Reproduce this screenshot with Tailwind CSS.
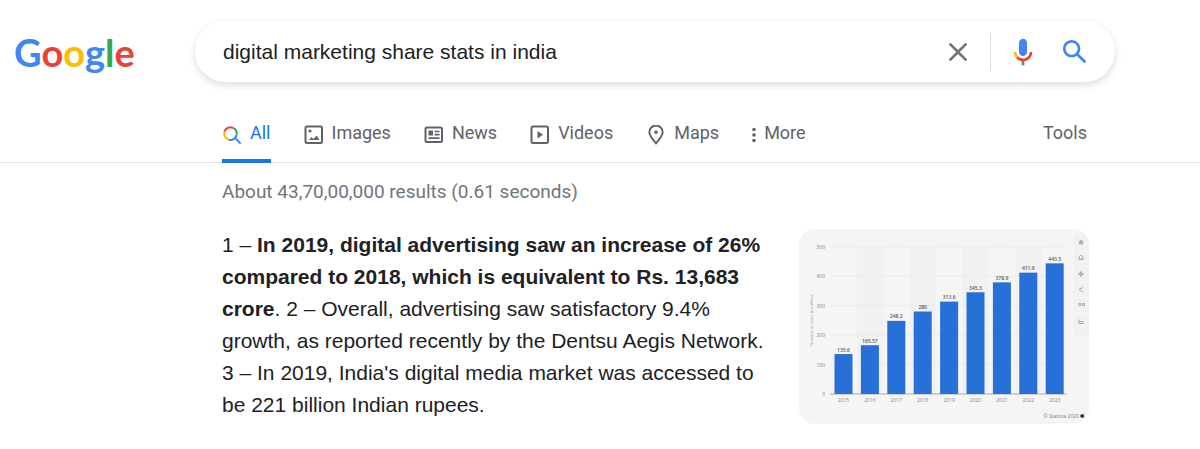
<!DOCTYPE html>
<html lang="en">
<head>
    <meta charset="UTF-8">
    <title>digital marketing share stats in india - Google Search</title>
    <meta name="viewport" content="width=device-width, initial-scale=1.0">
    <script src="https://cdn.jsdelivr.net/npm/@tailwindcss/browser@4"></script>
</head>
<body class="bg-white min-h-screen text-[#202124] font-['Liberation_Sans',Arial,sans-serif]">
    <!-- Logo and search box -->
    <header class="flex items-center pt-[21px] pl-[14px] pr-[85px]">
        <a href="#" aria-label="Google" class="w-[181px] shrink-0 font-['Lato',sans-serif] text-[38px] leading-none font-bold"><span class="text-[#4285f4]">G</span><span class="text-[#ea4335]">o</span><span class="text-[#fbbc05]">o</span><span class="text-[#4285f4]">g</span><span class="text-[#34a853]">l</span><span class="text-[#ea4335]">e</span></a>
        <form role="search" class="flex flex-1 items-center h-[61px] rounded-full bg-white pl-7 pr-6 shadow-[0_3px_6px_1px_rgba(64,60,67,0.14)]">
            <input type="text" name="q" aria-label="Search" value="digital marketing share stats in india" class="flex-1 min-w-0 text-[21px] outline-none">
            <button type="button" aria-label="Clear" class="mr-4">
                <svg class="size-8" viewBox="0 0 24 24" fill="#70757a"><path d="M19 6.41L17.59 5 12 10.59 6.41 5 5 6.41 10.59 12 5 17.59 6.41 19 12 13.41 17.59 19 19 17.59 13.41 12z"/></svg>
            </button>
            <span class="w-px h-[38px] bg-[#dadce0] mr-4"></span>
            <button type="button" aria-label="Search by voice" class="mr-5">
                <svg class="size-8" viewBox="0 0 24 24">
                    <path fill="#4285f4" d="m12 15c1.66 0 3-1.31 3-2.97v-7.02c0-1.66-1.34-3.01-3-3.01s-3 1.34-3 3.01v7.02c0 1.66 1.34 2.97 3 2.97z"/>
                    <path fill="#34a853" d="m11 18.08h2v3.92h-2z"/>
                    <path fill="#fbbc05" d="m7.05 16.87c-1.27-1.33-2.05-2.83-2.05-4.87h2c0 1.45 0.56 2.42 1.47 3.38v0.32l-1.15 1.18z"/>
                    <path fill="#ea4335" d="m12 16.93a4.97 5.25 0 0 1-3.54-1.55l-1.41 1.49c1.26 1.34 3.02 2.13 4.95 2.13 3.87 0 6.99-2.92 6.99-7h-1.99c0 2.92-2.24 4.93-5 4.93z"/>
                </svg>
            </button>
            <button type="submit" aria-label="Search">
                <svg class="size-8" viewBox="0 0 24 24" fill="#4285f4"><path d="M20.49 19l-5.73-5.73C15.53 12.2 16 10.91 16 9.5 16 5.91 13.09 3 9.5 3S3 5.91 3 9.5 5.91 16 9.5 16c1.41 0 2.7-.47 3.77-1.24L19 20.49 20.49 19zM5 9.5C5 7.01 7.01 5 9.5 5S14 7.01 14 9.5 11.99 14 9.5 14 5 11.99 5 9.5z"/></svg>
            </button>
        </form>
    </header>

    <!-- Result type tabs -->
    <nav class="flex justify-between mt-5 pl-[222px] pr-[113px] border-b border-[#e4e6e9] text-lg leading-[60px] text-[#5f6368] font-['Roboto',sans-serif]">
        <div class="flex gap-[33px]">
            <a href="#" class="flex items-center gap-2 h-[61px] -mb-px pt-1 border-b-4 border-[#1a73e8] text-[#1a73e8]">
                <svg class="size-5 mt-1" viewBox="0 0 20 20" fill="none" stroke-width="2">
                    <path stroke="#ea4335" d="M2.4 6.8A6.2 6.2 0 0 1 11.4 3.1"/>
                    <path stroke="#34a853" d="M11.4 3.1a6.2 6.2 0 0 1 3.3 6.4"/>
                    <path stroke="#fbbc05" d="M2.4 6.8a6.2 6.2 0 0 0 4.5 7.9"/>
                    <path stroke="#4285f4" d="M6.9 14.7a6.2 6.2 0 0 0 7.8-5.2M12.8 12.8l5.8 5.8"/>
                </svg>
                All
            </a>
            <a href="#" class="flex items-center gap-2 h-[60px] pt-px">
                <svg class="size-5 mt-1" viewBox="0 0 20 20" fill="none" stroke="currentColor" stroke-width="2">
                    <rect x="1.5" y="1.5" width="16.5" height="16.5" rx="1.5"/>
                    <circle cx="6" cy="6" r="1.6" fill="currentColor" stroke="none"/>
                    <path d="M5 15l2.5-3 2 2 3-3.5 3 4.5z" fill="currentColor" stroke="none"/>
                </svg>
                Images
            </a>
            <a href="#" class="flex items-center gap-2 h-[60px] pt-px">
                <svg class="size-5 mt-1" viewBox="0 0 20 20" fill="none" stroke="currentColor" stroke-width="2">
                    <rect x="1.5" y="2.5" width="16.5" height="14.5" rx="1.5"/>
                    <path d="M4.5 5.5h4.5v5h-4.5z" fill="currentColor" stroke="none"/>
                    <path d="M10.5 6.5h5M10.5 9.7h5M4.5 13.2h11" stroke-width="1.7"/>
                </svg>
                News
            </a>
            <a href="#" class="flex items-center gap-2 h-[60px] pt-px">
                <svg class="size-5 mt-1" viewBox="0 0 20 20" fill="none" stroke="currentColor" stroke-width="2">
                    <rect x="1.5" y="1.5" width="16.5" height="16.5" rx="1.5"/>
                    <path d="M7.5 6v7.5l5.5-3.7z" fill="currentColor" stroke="none"/>
                </svg>
                Videos
            </a>
            <a href="#" class="flex items-center gap-2 h-[60px] pt-px">
                <svg class="size-5 mt-1" viewBox="0 0 20 20" fill="none" stroke="currentColor" stroke-width="1.9">
                    <path d="M10 18.3C6 13.5 3.3 10.5 3.3 7.2a6.7 6.7 0 0 1 13.4 0c0 3.3-2.7 6.3-6.7 11.1z"/>
                    <circle cx="10" cy="7.2" r="1.8" fill="currentColor" stroke="none"/>
                </svg>
                Maps
            </a>
            <button type="button" class="flex items-center gap-2 h-[60px] pt-px">
                <svg class="w-1 h-5 mt-1" viewBox="0 0 4 20" fill="currentColor"><circle cx="2" cy="4.5" r="1.8"/><circle cx="2" cy="10" r="1.8"/><circle cx="2" cy="15.5" r="1.8"/></svg>
                More
            </button>
        </div>
        <button type="button" class="h-[60px] pt-px">Tools</button>
    </nav>

    <!-- Results -->
    <main class="pl-[222px] pr-[111px]">
        <p class="pt-[17px] text-[19px] leading-6 text-[#70757a] font-['Roboto',sans-serif]">About 43,70,00,000 results (0.61 seconds)</p>
        <div class="flex justify-between items-start pt-[25px]">
            <p class="w-[552px] text-[21px] leading-8">1 – <b>In 2019, digital advertising saw an increase of 26% compared to 2018, which is equivalent to Rs. 13,683 crore</b>. 2 – Overall, advertising saw satisfactory 9.4% growth, as reported recently by the Dentsu Aegis Network. 3&nbsp;– In 2019, India's digital media market was accessed to be 221 billion Indian rupees.</p>
            <a href="#" aria-label="Number of users in millions, 2015 to 2023" class="shrink-0 rounded-2xl overflow-hidden">
                <svg id="chart" class="block w-[290px] h-[195px] bg-[#f5f5f6] font-['Open_Sans',sans-serif]" viewBox="0 0 290 195"></svg>
            </a>
        </div>
    </main>

    <script>
        const chart = document.getElementById('chart');
        const values = [135.6, 165.57, 248.2, 280, 313.6, 345.3, 378.9, 411.9, 443.5];
        const baseline = 165;
        const scale = 0.2946;
        const step = 26.4;
        let out = '';

        // alternating column bands
        for (let i = 1; i < values.length; i += 2) {
            out += `<rect x="${31.5 + i * step}" y="18" width="${step}" height="147" fill="#f1f1f2"/>`;
        }

        // gridlines and axis labels
        for (let v = 0; v <= 500; v += 100) {
            const y = baseline - v * scale;
            out += `<path d="M31 ${y}H268" stroke="${v ? '#ebebec' : '#aaa'}"/>`;
            out += `<text x="26" y="${y + 2}" text-anchor="end" font-size="5" fill="#888">${v}</text>`;
        }
        out += `<text transform="translate(14 91) rotate(-90)" text-anchor="middle" font-size="4" fill="#999">Number of users in millions</text>`;

        values.forEach((v, i) => {
            const x = 35.5 + i * step;
            const h = v * scale;
            out += `<rect x="${x}" y="${baseline - h}" width="18" height="${h}" fill="#2670d8"/>`;
            out += `<text x="${x + 9}" y="${baseline - h - 2.5}" text-anchor="middle" font-size="5" font-weight="600" fill="#555">${v}</text>`;
            out += `<text x="${x + 9}" y="173" text-anchor="middle" font-size="5" fill="#888">${2015 + i}</text>`;
        });

        // toolbar on the right edge
        out += '<rect x="275" y="5" width="15" height="102" fill="#f1f1f2"/>';
        out += '<path d="M275 21.5h15M275 37.5h15M275 53h15M275 68.5h15M275 84.5h15" stroke="#f8f8f8"/>';
        out += '<g fill="none" stroke="#aaa" stroke-width="1">';
        out += '<path d="M282 11l.7 1.5 1.5.2-1 1 .2 1.5-1.4-.7-1.4.7.2-1.5-1-1 1.5-.2z" fill="#aaa"/>';
        out += '<path d="M280 30v-2l2-2 2 2v2zM279.5 30.5h5"/>';
        out += '<circle cx="282" cy="45" r="1.5"/><path d="M282 42v6M279 45h6"/>';
        out += '<path d="M284 58.5l-4 2 4 2.5"/>';
        out += '<path d="M280 74.5h2v2h-2zM283.5 74.5h2v2h-2z"/>';
        out += '<path d="M280 90.5v4h4v-2h-4"/>';
        out += '</g>';
        out += '<text x="280" y="189" text-anchor="end" font-size="5" fill="#777">© Statista 2020</text>';
        out += '<path d="M281.5 185.5h4l-1 1.5 1 1.5h-4z" fill="#222"/>';
        chart.innerHTML = out;
    </script>
</body>
</html>
